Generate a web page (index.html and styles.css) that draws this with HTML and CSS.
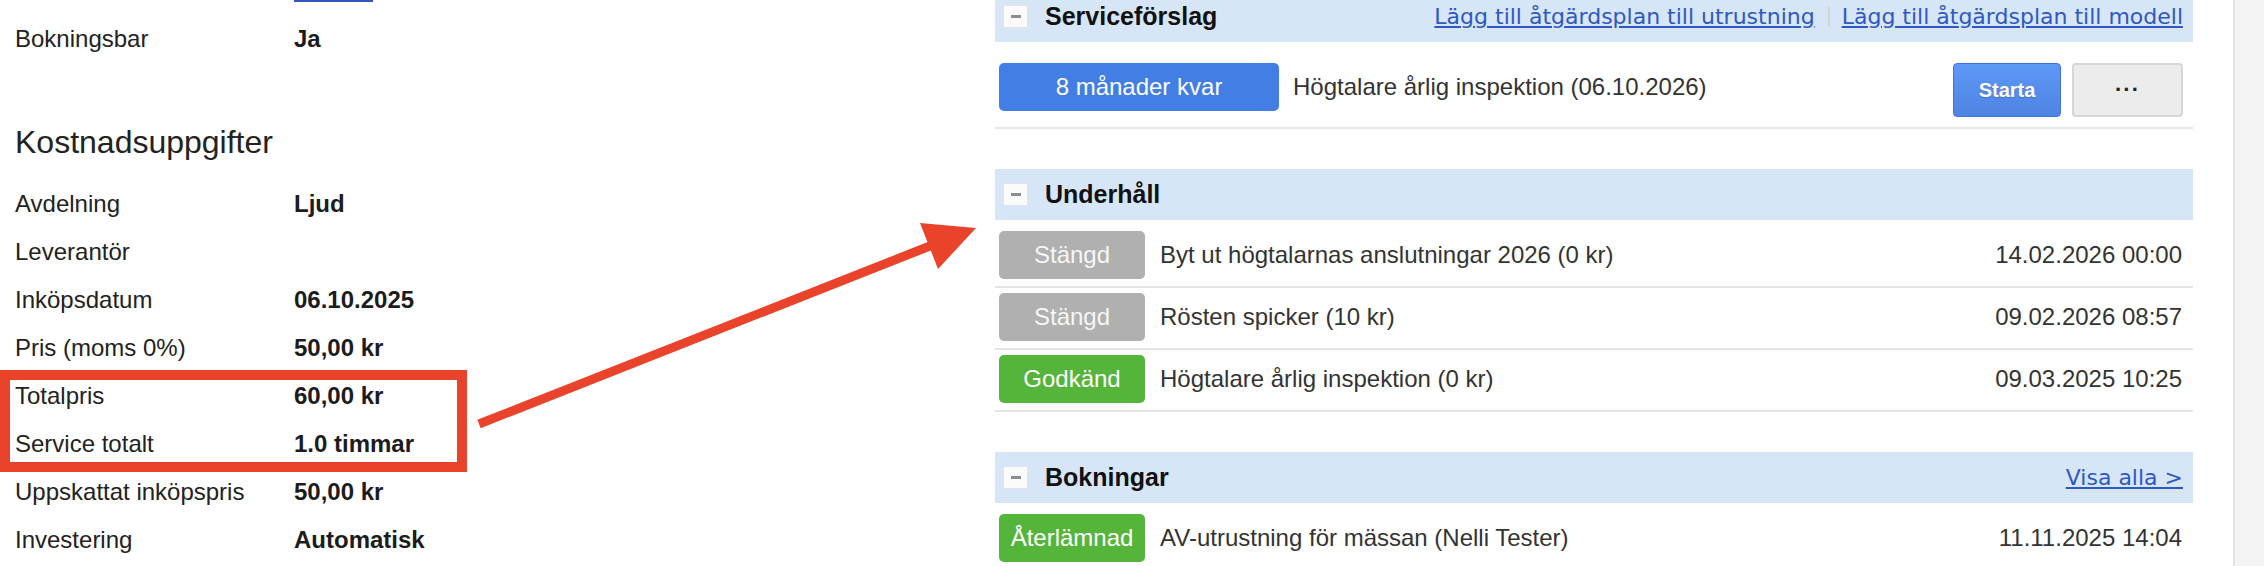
FILE: index.html
```html
<!DOCTYPE html>
<html lang="sv">
<head>
<meta charset="utf-8">
<title>Utrustning</title>
<link rel="stylesheet" href="styles.css">
</head>
<body>
<div class="page">
  <div class="left">
    <div class="topline"><span class="uline"></span></div>
    <div class="row"><span class="lbl">Bokningsbar</span><span class="val">Ja</span></div>
    <h1 class="heading">Kostnadsuppgifter</h1>
    <div class="row"><span class="lbl">Avdelning</span><span class="val">Ljud</span></div>
    <div class="row"><span class="lbl">Leverantör</span><span class="val"></span></div>
    <div class="row"><span class="lbl">Inköpsdatum</span><span class="val">06.10.2025</span></div>
    <div class="row"><span class="lbl">Pris (moms 0%)</span><span class="val">50,00 kr</span></div>
    <div class="row"><span class="lbl">Totalpris</span><span class="val">60,00 kr</span></div>
    <div class="row"><span class="lbl">Service totalt</span><span class="val">1.0 timmar</span></div>
    <div class="row"><span class="lbl">Uppskattat inköpspris</span><span class="val">50,00 kr</span></div>
    <div class="row"><span class="lbl">Investering</span><span class="val">Automatisk</span></div>
  </div>

  <div class="right">
    <section class="sec">
      <div class="band">
        <span class="tog"></span>
        <h2 class="title">Serviceförslag</h2>
        <div class="links">
          <a href="#">Lägg till åtgärdsplan till utrustning</a>
          <span class="sep"></span>
          <a href="#">Lägg till åtgärdsplan till modell</a>
        </div>
      </div>
      <div class="srow">
        <span class="badge badge-blue badge-wide">8 månader kvar</span>
        <span class="text">Högtalare årlig inspektion (06.10.2026)</span>
        <button class="btn btn-start">Starta</button>
        <button class="btn btn-more">···</button>
      </div>
    </section>

    <section class="sec">
      <div class="band">
        <span class="tog"></span>
        <h2 class="title">Underhåll</h2>
      </div>
      <div class="list">
        <div class="irow">
          <span class="badge badge-gray">Stängd</span>
          <span class="text">Byt ut högtalarnas anslutningar 2026 (0 kr)</span>
          <span class="date">14.02.2026 00:00</span>
        </div>
        <div class="irow">
          <span class="badge badge-gray">Stängd</span>
          <span class="text">Rösten spicker (10 kr)</span>
          <span class="date">09.02.2026 08:57</span>
        </div>
        <div class="irow">
          <span class="badge badge-green">Godkänd</span>
          <span class="text">Högtalare årlig inspektion (0 kr)</span>
          <span class="date">09.03.2025 10:25</span>
        </div>
      </div>
    </section>

    <section class="sec">
      <div class="band">
        <span class="tog"></span>
        <h2 class="title">Bokningar</h2>
        <div class="links">
          <a href="#">Visa alla &gt;</a>
        </div>
      </div>
      <div class="list">
        <div class="irow">
          <span class="badge badge-green">Återlämnad</span>
          <span class="text">AV-utrustning för mässan (Nelli Tester)</span>
          <span class="date">11.11.2025 14:04</span>
        </div>
      </div>
    </section>
  </div>

  <div class="gutter"></div>
  <div class="strip"></div>

  <div class="hl"></div>
  <svg class="arrow" width="2264" height="566" viewBox="0 0 2264 566" xmlns="http://www.w3.org/2000/svg">
    <line x1="479" y1="424" x2="935" y2="244" stroke="#e9432b" stroke-width="9"/>
    <polygon points="920,223 976,228 938,269" fill="#e9432b"/>
  </svg>
</div>
</body>
</html>
```

FILE: styles.css
```css
html, body {
  margin: 0;
  padding: 0;
  background: #ffffff;
}

body {
  font-family: "Liberation Sans", Arial, Helvetica, sans-serif;
  color: #222222;
  overflow: hidden;
}

.page {
  position: relative;
  display: flex;
  width: 2264px;
  height: 566px;
  overflow: hidden;
}

/* Left column */
.left {
  flex: 0 0 995px;
  box-sizing: border-box;
  padding-left: 15px;
}

.topline {
  height: 15px;
}

.uline {
  display: block;
  width: 79px;
  height: 2px;
  margin-left: 279px;
  background: #3157c0;
}

.row {
  display: grid;
  grid-template-columns: 279px auto;
  height: 48px;
  line-height: 48px;
  font-size: 24px;
  color: #222222;
}

.val {
  font-weight: bold;
  color: #1c1c1c;
}

.heading {
  margin: 59px 0 18px;
  font-size: 32px;
  line-height: 40px;
  font-weight: normal;
  color: #222222;
}

/* Right panel */
.right {
  flex: 0 0 1198px;
  margin-top: -9px;
}

.sec {
  margin-bottom: 40px;
}

.band {
  display: flex;
  align-items: center;
  height: 51px;
  padding: 0 10px 0 8px;
  background: #d6e6f6;
}

.tog {
  flex: 0 0 auto;
  display: flex;
  align-items: center;
  justify-content: center;
  width: 23px;
  height: 21px;
  margin-right: 17px;
  border: 1px solid #e3e3e3;
  background: #fbfbfb;
}

.tog::before {
  content: "";
  width: 10px;
  height: 3px;
  background: #8c8c8c;
}

.title {
  flex: 1;
  margin: 0;
  font-size: 25px;
  font-weight: bold;
  color: #111111;
}

.links {
  display: flex;
  align-items: center;
  font-family: "DejaVu Sans", Verdana, sans-serif;
  font-size: 22px;
}

.links a {
  color: #2f58c2;
  text-decoration: underline;
}

.sep {
  width: 2px;
  height: 19px;
  margin: 0 12px 0 13px;
  background: #d3d3d3;
}

/* Badges */
.badge {
  flex: 0 0 auto;
  width: 146px;
  height: 48px;
  line-height: 48px;
  text-align: center;
  border-radius: 5px;
  font-size: 24px;
  color: #ffffff;
}

.badge-wide {
  width: 280px;
}

.badge-blue {
  background: #427ee4;
}

.badge-gray {
  background: #b0b0b0;
  color: #f6f6f6;
}

.badge-green {
  background: #55b53a;
}

/* Service row */
.srow {
  display: flex;
  align-items: flex-start;
  margin-top: 21px;
  padding: 0 10px 10px 4px;
  border-bottom: 2px solid #e5e5e5;
}

.text {
  flex: 1;
  line-height: 48px;
  font-size: 24px;
  color: #333333;
}

.srow .text {
  margin-left: 14px;
}

.btn {
  box-sizing: border-box;
  height: 54px;
  border-radius: 4px;
  font-family: "Liberation Sans", Arial, sans-serif;
  cursor: pointer;
}

.btn-start {
  width: 108px;
  margin-right: 11px;
  border: 1px solid #3e74d8;
  background: linear-gradient(#5e98f7, #4e84e4);
  color: #ffffff;
  font-size: 20px;
  font-weight: bold;
  text-shadow: 0 1px 1px rgba(0, 0, 0, 0.2);
}

.btn-more {
  width: 111px;
  border: 2px solid #d6d6d6;
  background: #ececec;
  color: #222222;
  font-size: 22px;
  font-weight: bold;
  letter-spacing: 1px;
}

/* Item rows */
.list {
  margin-top: 6px;
}

.irow {
  display: flex;
  align-items: center;
  padding: 5px 11px 7px 4px;
  border-bottom: 2px solid #e5e5e5;
}

.irow .text {
  margin-left: 15px;
}

.date {
  font-size: 24px;
  color: #333333;
}

/* Edge */
.gutter {
  flex: 0 0 40px;
}

.strip {
  flex: 1;
  background: #f4f4f4;
  border-left: 2px solid #e2e2e2;
}

/* Annotation overlay */
.hl {
  position: absolute;
  left: 0;
  top: 370px;
  width: 467px;
  height: 102px;
  box-sizing: border-box;
  border: 10px solid #e9432b;
}

.arrow {
  position: absolute;
  left: 0;
  top: 0;
  pointer-events: none;
}
```
